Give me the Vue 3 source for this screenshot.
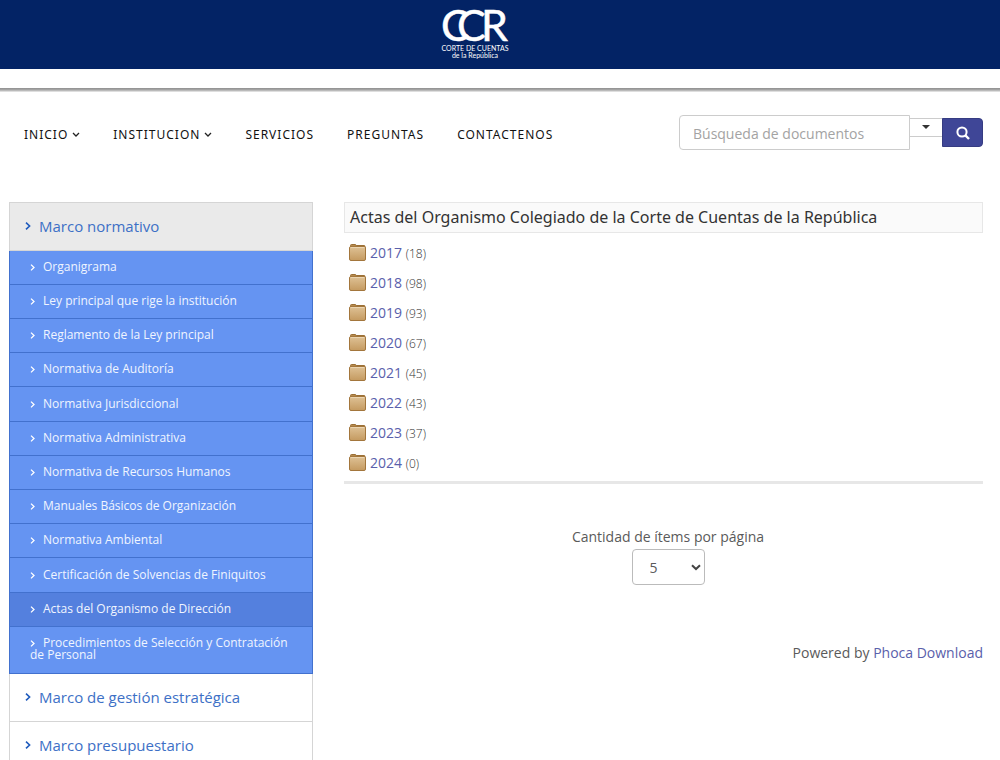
<script setup>
import { ref } from 'vue'

const query = ref('')
const perPage = ref('5')

const nav = [
  { label: 'INICIO', menu: true },
  { label: 'INSTITUCION', menu: true },
  { label: 'SERVICIOS' },
  { label: 'PREGUNTAS' },
  { label: 'CONTACTENOS' },
]

const sections = [
  {
    label: 'Marco normativo',
    open: true,
    items: [
      'Organigrama',
      'Ley principal que rige la institución',
      'Reglamento de la Ley principal',
      'Normativa de Auditoría',
      'Normativa Jurisdiccional',
      'Normativa Administrativa',
      'Normativa de Recursos Humanos',
      'Manuales Básicos de Organización',
      'Normativa Ambiental',
      'Certificación de Solvencias de Finiquitos',
      'Actas del Organismo de Dirección',
      'Procedimientos de Selección y Contratación de Personal',
    ],
  },
  { label: 'Marco de gestión estratégica', items: [] },
  { label: 'Marco presupuestario', items: [] },
]
const current = 'Actas del Organismo de Dirección'

const folders = [
  { year: 2017, count: 18 },
  { year: 2018, count: 98 },
  { year: 2019, count: 93 },
  { year: 2020, count: 67 },
  { year: 2021, count: 45 },
  { year: 2022, count: 43 },
  { year: 2023, count: 37 },
  { year: 2024, count: 0 },
]
</script>

<template>
  <div class="page">
    <header class="banner">
      <a href="#" class="brand" aria-label="Corte de Cuentas de la República">
        <svg width="72" height="56" viewBox="0 0 72 56" fill="#fff" font-family="Lato, sans-serif">
          <text class="mark" font-size="43" y="36"><tspan x="2">C</tspan><tspan x="18">C</tspan><tspan x="42">R</tspan></text>
          <text class="name" font-size="7" x="36" y="46" text-anchor="middle">CORTE DE CUENTAS</text>
          <text class="name" font-size="7" x="36" y="53" text-anchor="middle">de la República</text>
        </svg>
      </a>
    </header>
    <div class="rule"></div>

    <div class="topbar">
      <nav class="nav">
        <a v-for="n in nav" :key="n.label" href="#">{{ n.label }}<svg v-if="n.menu" width="8" height="6" viewBox="0 0 8 6"><path d="M1 1l3 3 3-3" /></svg></a>
      </nav>
      <form class="search" @submit.prevent>
        <input v-model="query" type="text" placeholder="Búsqueda de documentos" aria-label="Búsqueda de documentos" />
        <button type="button" class="toggle" aria-label="Opciones de búsqueda">
          <svg width="8" height="4" viewBox="0 0 8 4"><path d="M0 0h8l-4 4z" fill="#333" /></svg>
        </button>
        <button type="submit" class="go" aria-label="Buscar">
          <svg width="14" height="14" viewBox="0 0 14 14" fill="none" stroke="#fff" stroke-width="2"><circle cx="6" cy="6" r="4.6" /><path d="M9.4 9.4l3.6 3.6" stroke-width="2.4" /></svg>
        </button>
      </form>
    </div>

    <div class="columns">
      <aside class="side">
        <ul class="sections">
          <li v-for="s in sections" :key="s.label">
            <a href="#" class="section" :class="{ open: s.open }"><svg width="6" height="8" viewBox="0 0 6 8"><path d="M1 .6L4.6 4 1 7.4" /></svg>{{ s.label }}</a>
            <ul v-if="s.items.length" class="items">
              <li v-for="i in s.items" :key="i">
                <a href="#" :class="{ current: i === current }"><svg width="5" height="7" viewBox="0 0 5 7"><path d="M1 .6l3 2.9-3 2.9" /></svg>{{ i }}</a>
              </li>
            </ul>
          </li>
        </ul>
      </aside>

      <main class="content">
        <h3>Actas del Organismo Colegiado de la Corte de Cuentas de la República</h3>
        <ul class="folders">
          <li v-for="f in folders" :key="f.year">
            <svg width="17" height="17" viewBox="0 0 17 17">
              <defs>
                <linearGradient id="folder" x1="0" y1="0" x2="0" y2="1">
                  <stop offset="0" stop-color="#dfc296" />
                  <stop offset="1" stop-color="#c49a60" />
                </linearGradient>
              </defs>
              <path d="M1.5 4V1.5Q1.5 .5 2.5 .5h3.5q1 0 1.2 1H15q1 0 1 1V4z" fill="#b58a4e" stroke="#9c7036" />
              <rect x=".5" y="2.5" width="16" height="14" rx="1.5" fill="url(#folder)" stroke="#a3763c" />
              <path d="M1.5 3.5h14" stroke="#ecd6b2" />
            </svg>
            <div><a href="#">{{ f.year }}</a> <small>({{ f.count }})</small></div>
          </li>
        </ul>
        <form class="paging" @submit.prevent>
          <label for="per-page">Cantidad de ítems por página</label>
          <div class="pick">
            <select id="per-page" v-model="perPage">
              <option>5</option>
              <option>10</option>
              <option>20</option>
            </select>
            <svg width="10" height="7" viewBox="0 0 10 7"><path d="M1 1.2l4 3.8 4-3.8" /></svg>
          </div>
        </form>
        <p class="powered">Powered by <a href="#">Phoca Download</a></p>
      </main>
    </div>
  </div>
</template>

<style>
html {
  overflow: hidden;
}
body {
  background: #fff;
}
</style>

<style scoped>
.page {
  height: 100vh;
  overflow: hidden;
  font: 400 14px/20px "Open Sans", sans-serif;
  color: #5a5a5a;
}
* {
  box-sizing: border-box;
}
a {
  text-decoration: none;
  color: #5a60ab;
}
ul {
  list-style: none;
  margin: 0;
  padding: 0;
}
.banner {
  height: 69px;
  padding: 5px 50px 0 0;
  background: #032365;
  text-align: center;
}
.brand svg {
  display: inline-block;
  overflow: visible;
}
.mark {
  stroke: #fff;
  stroke-width: 0.5;
}
.rule {
  height: 25px;
  padding-top: 19px;
}
.rule::after {
  content: "";
  display: block;
  height: 4px;
  background: linear-gradient(#8f8f8f, #a8a8a8 50%, #f0f0f0);
}
.topbar {
  display: flex;
  justify-content: space-between;
  align-items: flex-start;
  padding: 21px 17px 0 24px;
}
.nav {
  display: flex;
  gap: 33px;
  padding-top: 10px;
}
.nav a {
  font-family: "Noto Sans", sans-serif;
  font-size: 12px;
  letter-spacing: 1px;
  color: #111;
  white-space: nowrap;
}
.nav svg {
  margin: 0 0 1px 4px;
}
.nav path {
  fill: none;
  stroke: #222;
  stroke-width: 1.3;
}
.search {
  display: flex;
  align-items: flex-start;
}
.search input {
  width: 231px;
  height: 35px;
  padding: 2px 13px 0;
  border: 1px solid #ccc;
  border-radius: 4px 0 0 4px;
  font: 400 14px "Open Sans", sans-serif;
}
.search input::placeholder {
  color: #a3a3a3;
}
.toggle {
  display: flex;
  justify-content: center;
  width: 34px;
  height: 19px;
  margin: 3px 0 0 -1px;
  padding: 6px 0 0;
  border: 1px solid #ccc;
  background: #fff;
}
.go {
  display: flex;
  align-items: center;
  justify-content: center;
  width: 41px;
  height: 29px;
  margin: 3px 0 0 -1px;
  padding: 0;
  border: 1px solid #363c82;
  border-radius: 0 4px 4px 0;
  background: #3f4697;
}
.columns {
  display: grid;
  grid-template-columns: 304px minmax(0, 1fr);
  gap: 31px;
  padding: 52px 17px 0 9px;
}
.sections {
  border: 1px solid #d5d5d5;
}
.section {
  display: flex;
  align-items: center;
  gap: 8px;
  height: 48px;
  padding: 0 0 1px 15px;
  border-bottom: 1px solid #d5d5d5;
  font-size: 15px;
  color: #3d70c6;
}
.section.open {
  background: #eaeaea;
}
.sections path {
  fill: none;
  stroke: #1f5bbd;
  stroke-width: 1.6;
}
.items {
  margin: 0 -1px;
}
.items a {
  display: block;
  padding: 10px 20px 11px;
  border: 1px solid #4271ce;
  border-top: 0;
  background: #6594f2;
  font-size: 12px;
  line-height: 12px;
  color: #f0f5ff;
}
.items li:nth-child(5n) a {
  padding-top: 11px;
}
.items li:last-child a {
  padding-bottom: 12px;
}
.items a.current {
  background: #5480de;
}
.sections .items path {
  stroke: #fff;
  stroke-width: 1.3;
}
.items svg {
  margin-right: 8px;
}
.content h3 {
  margin: 0;
  height: 31px;
  padding: 0 5px;
  border: 1px solid #e7e7e7;
  background: #fafafa;
  font-family: "Noto Sans", sans-serif;
  font-size: 16px;
  font-weight: 400;
  line-height: 28px;
  color: #333;
}
.folders {
  padding: 5px 5px 3px;
  border-bottom: 3px solid #e7e7e7;
}
.folders li {
  display: flex;
  align-items: center;
  gap: 4px;
  height: 30px;
}
.folders svg {
  margin-bottom: 1px;
}
.folders small {
  font-size: 12px;
  font-weight: 300;
  color: #333;
}
.paging {
  display: flex;
  flex-direction: column;
  align-items: center;
  padding: 43px 0 0 9px;
}
.pick {
  display: grid;
  align-items: center;
  margin-top: 2px;
}
.pick > * {
  grid-area: 1 / 1;
}
.pick svg {
  justify-self: end;
  margin-right: 4px;
  pointer-events: none;
}
.pick path {
  fill: none;
  stroke: #444;
  stroke-width: 2;
}
.pick select {
  appearance: none;
  width: 73px;
  height: 36px;
  padding: 0 17px;
  border: 1px solid #bbb;
  border-radius: 4px;
  background: #fff;
  color: #5a5a5a;
  font: 400 14px "Open Sans", sans-serif;
}
.powered {
  margin: 58px 0 0;
  text-align: right;
}
</style>
